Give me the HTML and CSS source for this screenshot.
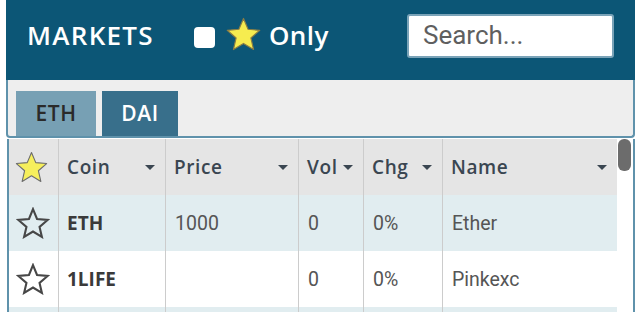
FILE: index.html
```html
<!DOCTYPE html>
<html lang="en">
<head>
<meta charset="utf-8">
<title>Markets</title>
<link rel="stylesheet" href="styles.css">
</head>
<body>
<div class="panel">
  <header class="bar">
    <h1 class="title">MARKETS</h1>
    <label class="only">
      <span class="check"></span>
      <svg class="star-big" viewBox="0 0 24 23" width="37" height="34"><polygon points="12,1 15.1,8.3 23,9 17,14.2 18.8,22 12,17.9 5.2,22 7,14.2 1,9 8.9,8.3" fill="#f6ec4f" stroke="#8a7d45" stroke-width="0.8" stroke-linejoin="round"/></svg>
      <span class="only-text">Only</span>
    </label>
    <div class="search">Search...</div>
  </header>
  <div class="tabs">
    <div class="tab tab-eth">ETH</div>
    <div class="tab tab-dai">DAI</div>
  </div>
  <div class="table">
    <div class="grid">
      <div class="row head">
        <div class="cell c-star"><svg viewBox="0 0 24 23" width="37" height="34"><polygon points="12,1 15.1,8.3 23,9 17,14.2 18.8,22 12,17.9 5.2,22 7,14.2 1,9 8.9,8.3" fill="#f6ef5c" stroke="#6d6d6d" stroke-width="0.8" stroke-linejoin="round"/></svg></div>
        <div class="cell c-coin"><span>Coin</span><i class="caret"></i></div>
        <div class="cell c-price"><span>Price</span><i class="caret"></i></div>
        <div class="cell c-vol"><span>Vol</span><i class="caret"></i></div>
        <div class="cell c-chg"><span>Chg</span><i class="caret"></i></div>
        <div class="cell c-name"><span>Name</span><i class="caret"></i></div>
      </div>
      <div class="row odd">
        <div class="cell c-star"><svg viewBox="0 0 24 23" width="34" height="32"><polygon points="12,1.5 14.9,8.6 22.5,9.3 16.7,14.3 18.4,21.5 12,17.6 5.6,21.5 7.3,14.3 1.5,9.3 9.1,8.6" fill="none" stroke="#474747" stroke-width="1.5" stroke-linejoin="miter"/></svg></div>
        <div class="cell c-coin coin">ETH</div>
        <div class="cell c-price">1000</div>
        <div class="cell c-vol">0</div>
        <div class="cell c-chg">0%</div>
        <div class="cell c-name">Ether</div>
      </div>
      <div class="row even">
        <div class="cell c-star"><svg viewBox="0 0 24 23" width="34" height="32"><polygon points="12,1.5 14.9,8.6 22.5,9.3 16.7,14.3 18.4,21.5 12,17.6 5.6,21.5 7.3,14.3 1.5,9.3 9.1,8.6" fill="none" stroke="#474747" stroke-width="1.5" stroke-linejoin="miter"/></svg></div>
        <div class="cell c-coin coin">1LIFE</div>
        <div class="cell c-price"></div>
        <div class="cell c-vol">0</div>
        <div class="cell c-chg">0%</div>
        <div class="cell c-name">Pinkexc</div>
      </div>
      <div class="row odd">
        <div class="cell c-star"></div>
        <div class="cell c-coin"></div>
        <div class="cell c-price"></div>
        <div class="cell c-vol"></div>
        <div class="cell c-chg"></div>
        <div class="cell c-name"></div>
      </div>
    </div>
    <div class="track"><div class="thumb"></div></div>
  </div>
</div>
</body>
</html>
```

FILE: styles.css
```css
html, body {
  margin: 0;
  padding: 0;
  background: #ffffff;
  overflow: hidden;
}
.panel {
  margin-left: 6px;
  width: 629px;
}
.bar {
  height: 74px;
  padding: 0 21px 6px 21px;
  background: #0c5676;
  display: flex;
  align-items: center;
}
.title {
  margin: 0 0 5px 0;
  font-family: "Open Sans", sans-serif;
  font-weight: 600;
  font-size: 26px;
  letter-spacing: 1.3px;
  color: #ffffff;
}
.only {
  display: flex;
  align-items: center;
  margin-left: 40px;
}
.check {
  width: 21px;
  height: 21px;
  background: #ffffff;
  border-radius: 4px;
  margin-right: 10px;
}
.star-big {
  margin-top: -7px;
}
.only-text {
  margin-left: 7px;
  margin-bottom: 4px;
  font-family: "Open Sans", sans-serif;
  font-weight: 600;
  font-size: 26px;
  letter-spacing: 0.4px;
  color: #ffffff;
}
.search {
  margin-left: auto;
  margin-top: -2px;
  box-sizing: border-box;
  width: 207px;
  height: 44px;
  border: 2px solid #7aa3b8;
  border-radius: 3px;
  background: #ffffff;
  padding-left: 14px;
  font-family: Roboto, sans-serif;
  font-size: 26px;
  line-height: 39px;
  color: #5f5f5f;
}
.tabs {
  box-sizing: border-box;
  height: 58px;
  padding: 11px 8px 0 8px;
  background: #eeeeee;
  border: 2px solid #5f92ab;
  border-top: 0;
  border-radius: 0 0 4px 4px;
  display: flex;
  align-items: flex-end;
  gap: 6px;
}
.tab {
  height: 45px;
  line-height: 45px;
  text-align: center;
  font-family: "Open Sans", sans-serif;
  font-weight: 600;
  font-size: 21px;
  letter-spacing: 0.6px;
}
.tab-eth {
  width: 80px;
  background: #77a0b4;
  color: #2a2a2a;
}
.tab-dai {
  width: 76px;
  background: #386f8b;
  color: #ffffff;
}
.table {
  margin-left: 1px;
  margin-top: 1px;
  height: 200px;
  border-left: 2px solid #5f92ab;
  border-right: 2px solid #5f92ab;
  display: flex;
  background: #ffffff;
}
.grid {
  width: 608px;
}
.row {
  display: flex;
  height: 56px;
}
.row.head { background: #e5e5e5; }
.row.odd { background: #e1edf0; }
.row.even { background: #ffffff; }
.cell {
  box-sizing: border-box;
  border-right: 1px solid #cccccc;
  display: flex;
  align-items: center;
  padding-left: 9px;
  font-family: Roboto, sans-serif;
  font-size: 19.5px;
  color: #555555;
}
.head .cell {
  font-family: "Open Sans", sans-serif;
  font-weight: 600;
  font-size: 19px;
  letter-spacing: 0.6px;
  color: #3a4651;
  justify-content: space-between;
  padding-left: 8px;
  padding-right: 10px;
}
.c-star { width: 50px; padding-left: 7px; }
.head .c-star { padding-left: 6px; justify-content: flex-start; }
.c-coin { width: 107px; }
.c-price { width: 133px; }
.c-vol { width: 65px; }
.c-chg { width: 79px; }
.c-name { width: 174px; border-right: 0; }
.cell.coin {
  padding-left: 8px;
  font-family: "Open Sans", sans-serif;
  font-weight: 700;
  font-size: 19px;
  color: #3a3a3a;
  letter-spacing: 0;
}
.caret {
  width: 0;
  height: 0;
  border-left: 5px solid transparent;
  border-right: 5px solid transparent;
  border-top: 5px solid #3a4651;
}
.track {
  width: 15px;
  background: #ffffff;
}
.thumb {
  width: 13px;
  height: 32px;
  margin-left: 1px;
  background: #6c6c6c;
  border-radius: 6px;
}
```
